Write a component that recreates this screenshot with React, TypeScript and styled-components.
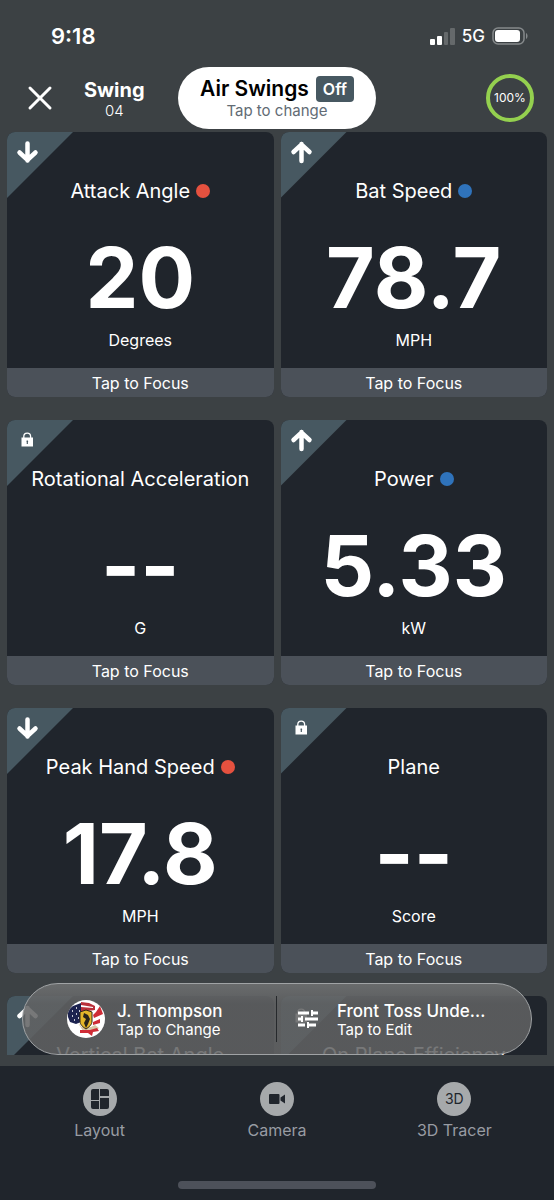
import React from "react";
import styled, { createGlobalStyle } from "styled-components";

const GlobalStyle = createGlobalStyle`
  *, *::before, *::after { box-sizing: border-box; }
  body { margin: 0; background: #3c4144; }
  body, button { font-family: Inter, "Liberation Sans", sans-serif; }
  button { margin: 0; padding: 0; border: 0; background: none; color: inherit; cursor: pointer; }
  h1, h2, p { margin: 0; }
`;

const Screen = styled.div`
  display: flex;
  flex-direction: column;
  height: 100vh;
  background: #3c4144;
  color: #fff;
`;

const StatusBar = styled.div`
  display: flex;
  flex: none;
  align-items: center;
  justify-content: space-between;
  height: 66px;
  padding: 6px 26px 0 51px;
`;

const Clock = styled.time`
  font-size: 22px;
  font-weight: 600;
  line-height: 24px;
`;

const StatusIcons = styled.div`
  display: flex;
  align-items: center;
  gap: 7px;
  font-size: 17px;
  font-weight: 500;
  line-height: 20px;
`;

const Header = styled.header`
  display: grid;
  flex: none;
  grid-template-columns: 1fr auto 1fr;
  align-items: center;
  height: 66px;
  padding: 0 20px 3px;
`;

const HeaderStart = styled.div`
  display: flex;
  align-items: center;
  gap: 24px;
`;

const CloseButton = styled.button`
  display: flex;
  align-items: center;
  justify-content: center;
  width: 40px;
  height: 40px;
`;

const SwingLabel = styled.div`
  text-align: center;
  padding-top: 4px;
`;

const SwingTitle = styled.h1`
  font-size: 20px;
  font-weight: 700;
  line-height: 22px;
`;

const SwingNumber = styled.p`
  font-size: 15px;
  font-weight: 300;
  line-height: 20px;
`;

const ModeButton = styled.button`
  display: flex;
  flex-direction: column;
  align-items: center;
  justify-content: center;
  height: 62px;
  padding: 0 22px;
  border-radius: 31px;
  background: #fff;
  color: #000;
`;

const ModeTitle = styled.span`
  display: flex;
  align-items: center;
  gap: 7px;
  font-size: 21px;
  font-weight: 600;
  line-height: 26px;
`;

const ModeState = styled.span`
  padding: 0 7px;
  border-radius: 4px;
  background: #475861;
  color: #fff;
  font-size: 16px;
`;

const ModeHint = styled.span`
  color: #626b74;
  font-size: 15px;
  line-height: 18px;
`;

const Gauge = styled.div`
  display: flex;
  align-items: center;
  justify-content: center;
  justify-self: end;
  width: 48px;
  height: 48px;
  border: 4px solid #94d04f;
  border-radius: 50%;
  font-size: 12px;
  line-height: 16px;
`;

const Main = styled.main`
  position: relative;
  display: flex;
  flex: 1;
  flex-direction: column;
  min-height: 0;
  padding-bottom: 11px;
`;

const Scroller = styled.div`
  flex: 1;
  min-height: 0;
  padding: 0 7px;
  overflow-y: auto;
  scrollbar-width: none;
`;

const Grid = styled.div`
  display: grid;
  grid-template-columns: 1fr 1fr;
  gap: 23px 7px;
`;

const Card = styled.article`
  position: relative;
  display: flex;
  flex-direction: column;
  height: 265px;
  border-radius: 8px;
  background: #20252c;
  overflow: hidden;
`;

const Corner = styled.div`
  position: absolute;
  top: 0;
  left: 0;
  width: 66px;
  height: 66px;
  padding: 8px;
  background: #475861;
  clip-path: polygon(0 0, 100% 0, 0 100%);
`;

const CardBody = styled.div`
  display: flex;
  flex: 1;
  flex-direction: column;
  align-items: center;
  padding-top: 45px;
`;

const CardTitle = styled.h2`
  display: flex;
  align-items: center;
  gap: 6px;
  font-size: 20px;
  font-weight: 400;
  line-height: 28px;
  white-space: nowrap;
`;

const Dot = styled.span<{ $color: string }>`
  width: 14px;
  height: 14px;
  border-radius: 50%;
  background: ${(p) => p.$color};
`;

const Value = styled.p`
  margin-top: 23px;
  font-size: 84px;
  font-weight: 700;
  line-height: 100px;
`;

const Unit = styled.p`
  font-size: 16px;
  line-height: 24px;
`;

const FocusButton = styled.button`
  height: 29px;
  background: #4b5159;
  font-size: 16px;
  line-height: 20px;
`;

const Dock = styled.div`
  position: absolute;
  right: 22px;
  bottom: 11px;
  left: 22px;
  display: grid;
  grid-template-columns: 1fr 1fr;
  height: 72px;
  border: 1px solid #a0a3a5;
  border-radius: 36px;
  background: linear-gradient(rgba(112, 114, 115, 0.86), rgba(97, 98, 99, 0.86) 20px);
`;

const DockButton = styled.button<{ $divided?: boolean; $inset: number; $gap: number }>`
  position: relative;
  display: flex;
  align-items: center;
  gap: ${(p) => p.$gap}px;
  padding-left: ${(p) => p.$inset}px;
  min-width: 0;
  text-align: left;
  &::after {
    content: ${(p) => (p.$divided ? '""' : "none")};
    position: absolute;
    top: 12px;
    right: 0;
    bottom: 12px;
    width: 1px;
    background: #26292c;
  }
`;

const DockText = styled.span`
  display: flex;
  flex-direction: column;
  min-width: 0;
  padding-top: 2px;
`;

const DockTitle = styled.span`
  font-size: 17px;
  font-weight: 500;
  line-height: 20px;
  white-space: nowrap;
`;

const DockHint = styled.span`
  font-size: 15px;
  line-height: 18px;
`;

const Footer = styled.footer`
  flex: none;
  background: #20252c;
`;

const Tabs = styled.nav`
  display: grid;
  grid-template-columns: 1fr 1fr 1fr;
  padding: 16px 11px 41px;
`;

const TabButton = styled.button`
  display: flex;
  flex-direction: column;
  align-items: center;
  gap: 4px;
  color: #989ca3;
  font-size: 16px;
  line-height: 20px;
`;

const TabIcon = styled.span`
  display: flex;
  align-items: center;
  justify-content: center;
  width: 34px;
  height: 34px;
  border-radius: 50%;
  background: #a6a9ab;
  color: #20252c;
  font-size: 14px;
`;

const HomeIndicator = styled.div`
  width: 198px;
  height: 8px;
  margin: 0 auto 11px;
  border-radius: 4px;
  background: #4d515a;
`;

const RED = "#e5513f";
const BLUE = "#2f73bb";

type Badge = "up" | "down" | "lock";

interface Metric {
  title: string;
  badge: Badge;
  reading?: { value: string; unit: string };
  dot?: string;
}

const metrics: Metric[] = [
  { title: "Attack Angle", badge: "down", reading: { value: "20", unit: "Degrees" }, dot: RED },
  { title: "Bat Speed", badge: "up", reading: { value: "78.7", unit: "MPH" }, dot: BLUE },
  { title: "Rotational Acceleration", badge: "lock", reading: { value: "--", unit: "G" } },
  { title: "Power", badge: "up", reading: { value: "5.33", unit: "kW" }, dot: BLUE },
  { title: "Peak Hand Speed", badge: "down", reading: { value: "17.8", unit: "MPH" }, dot: RED },
  { title: "Plane", badge: "lock", reading: { value: "--", unit: "Score" } },
  { title: "Vertical Bat Angle", badge: "up" },
  { title: "On Plane Efficiency", badge: "lock" },
];

function BadgeIcon({ kind }: { kind: Badge }) {
  if (kind === "lock") {
    return (
      <svg width="24" height="24" viewBox="0 0 24 24" aria-label="Locked">
        <path d="M8.800 10V8.500a3.400 3.400 0 0 1 6.800 0V10" fill="none" stroke="#fff" strokeWidth="1.300" />
        <path d="M6.500 9.500h11.500v9H6.500z" fill="#fff" />
        <path d="M12.300 12.500v3.500M11.500 13.300h1.600" stroke="#475861" strokeWidth="1.200" />
      </svg>
    );
  }
  return (
    <svg width="24" height="24" viewBox="0 0 24 24" aria-label={kind === "up" ? "Rising" : "Falling"}>
      <path
        d={kind === "up" ? "M12.500 21V4M4.500 12l8-7.500L20.500 12" : "M12.500 3.500v17M4.500 12.500l8 7.500L20.500 12.500"}
        fill="none"
        stroke="#fff"
        strokeWidth="4.500"
        strokeLinecap="round"
      />
    </svg>
  );
}

function MetricCard({ metric }: { metric: Metric }) {
  return (
    <Card>
      <Corner>
        <BadgeIcon kind={metric.badge} />
      </Corner>
      <CardBody>
        <CardTitle>
          {metric.title}
          {metric.dot && <Dot $color={metric.dot} />}
        </CardTitle>
        {metric.reading && (
          <>
            <Value>{metric.reading.value}</Value>
            <Unit>{metric.reading.unit}</Unit>
          </>
        )}
      </CardBody>
      {metric.reading && <FocusButton type="button">Tap to Focus</FocusButton>}
    </Card>
  );
}

function Avatar() {
  return (
    <svg width="38" height="38" viewBox="0 0 38 38" aria-hidden="true">
      <clipPath id="avatar-clip">
        <circle cx="19" cy="19" r="19" />
      </clipPath>
      <g clipPath="url(#avatar-clip)">
        <path d="M0 0h38v38H0z" fill="#fff" />
        <path d="M14 2l8 1 6 3 0 4-14 2z" fill="#b92f3a" />
        <path d="M14 5l12 2v1L14 7z" fill="#fff" />
        <path d="M1 10l5-4 8-3v19l-5 2-6-2-2-5z" fill="#1d2350" />
        <path d="M5 11h1M9 8h1M12 11h1M5 16h1M9 14h1M7 20h1M11 18h1" stroke="#fff" strokeWidth="1.500" />
        <path d="M26 15l3-3 4-6 3 8-9 4zM26 22l7-3v4l-7 2z" fill="#cf2c36" />
        <path d="M11 23l4 4 9 0 4-2 4 3-4 3-12 0z" fill="#d9c7a6" />
        <path d="M13 30l10 0 7-2 2 3-6 1-1 4-4-3-8 0z" fill="#cf2c36" />
        <path d="M13 12l6-2 6 2v9c0 4-3 6-6 8-3-2-6-4-6-8z" fill="#e3b52a" stroke="#332a18" />
        <path d="M17 13l4 2 2 4-2 5-2 4-2-5 2-4-3-2z" fill="#27221b" />
      </g>
    </svg>
  );
}

export default function App() {
  return (
    <Screen>
      <GlobalStyle />
      <StatusBar>
        <Clock>9:18</Clock>
        <StatusIcons>
          <svg width="25" height="17" viewBox="0 0 25 17" aria-label="Signal">
            <rect x="0" y="11" width="5" height="6" rx="1" fill="#fff" />
            <rect x="7" y="8" width="5" height="9" rx="1" fill="#fff" />
            <rect x="14" y="4" width="4" height="13" rx="1" fill="#65696b" />
            <rect x="20" y="0" width="5" height="17" rx="1" fill="#65696b" />
          </svg>
          5G
          <svg width="36" height="18" viewBox="0 0 36 18" aria-label="Battery">
            <rect x="1" y="1" width="31" height="16" rx="5" fill="none" stroke="#85898b" strokeWidth="1.500" />
            <rect x="3" y="3" width="25" height="12" rx="3" fill="#fff" />
            <path d="M34 6c2 1 2 5 0 6z" fill="#85898b" />
          </svg>
        </StatusIcons>
      </StatusBar>
      <Header>
        <HeaderStart>
          <CloseButton type="button" aria-label="Close">
            <svg width="26" height="26" viewBox="0 0 26 26">
              <path d="M3 3l20 20M23 3L3 23" stroke="#fff" strokeWidth="3" strokeLinecap="round" />
            </svg>
          </CloseButton>
          <SwingLabel>
            <SwingTitle>Swing</SwingTitle>
            <SwingNumber>04</SwingNumber>
          </SwingLabel>
        </HeaderStart>
        <ModeButton type="button">
          <ModeTitle>
            Air Swings <ModeState>Off</ModeState>
          </ModeTitle>
          <ModeHint>Tap to change</ModeHint>
        </ModeButton>
        <Gauge>100%</Gauge>
      </Header>
      <Main>
        <Scroller>
          <Grid>
            {metrics.map((metric) => (
              <MetricCard key={metric.title} metric={metric} />
            ))}
          </Grid>
        </Scroller>
        <Dock>
          <DockButton type="button" $divided $inset={44} $gap={12}>
            <Avatar />
            <DockText>
              <DockTitle>J. Thompson</DockTitle>
              <DockHint>Tap to Change</DockHint>
            </DockText>
          </DockButton>
          <DockButton type="button" $inset={20} $gap={18}>
            <svg width="22" height="20" viewBox="0 0 22 20" aria-hidden="true">
              <path
                d="M1 4h11M15 4h6M1 10h4M8 10h13M1 16h7M11 16h8"
                stroke="#fff"
                strokeWidth="3"
              />
              <path d="M15 1v6M5 7v6M11 13v6" stroke="#fff" strokeWidth="2" />
            </svg>
            <DockText>
              <DockTitle>Front Toss Unde...</DockTitle>
              <DockHint>Tap to Edit</DockHint>
            </DockText>
          </DockButton>
        </Dock>
      </Main>
      <Footer>
        <Tabs>
          <TabButton type="button">
            <TabIcon>
              <svg width="18" height="20" viewBox="0 0 18 20">
                <path
                  d="M2 0h6v11H0V2q0-2 2-2zM9 0h7q2 0 2 2v5H9zM0 12h8v8H2q-2 0-2-2zM9 9h9v9q0 2-2 2H9z"
                  fill="#20252c"
                />
              </svg>
            </TabIcon>
            Layout
          </TabButton>
          <TabButton type="button">
            <TabIcon>
              <svg width="16" height="10" viewBox="0 0 16 10">
                <path d="M1 0h8.500q1 0 1 1v8q0 1-1 1H1q-1 0-1-1V1q0-1 1-1zM11.500 3.500L16 .5v9l-4.500-3z" fill="#20252c" />
              </svg>
            </TabIcon>
            Camera
          </TabButton>
          <TabButton type="button">
            <TabIcon>3D</TabIcon>
            3D Tracer
          </TabButton>
        </Tabs>
        <HomeIndicator />
      </Footer>
    </Screen>
  );
}
